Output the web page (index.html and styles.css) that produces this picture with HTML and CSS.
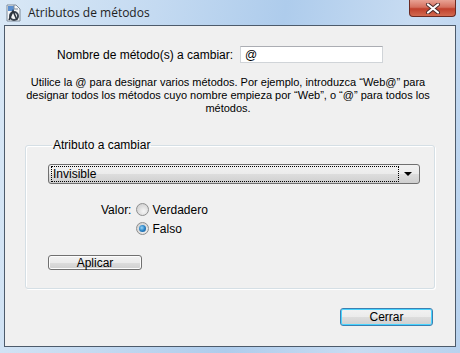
FILE: index.html
```html
<!DOCTYPE html>
<html lang="es">
<head>
    <meta charset="UTF-8">
    <title>Atributos de métodos</title>
    <link rel="stylesheet" href="styles.css">
</head>
<body>
    <div class="window">
        <div class="titlebar">
            <svg class="app-icon" width="18" height="18" viewBox="0 0 18 18">
                <path d="M2 1h9l4 4v12H2z" fill="#f4f6f8" stroke="#7d8a99"/>
                <rect x="3" y="2" width="6" height="5" fill="#5a8fd0"/>
                <path d="M9 1v4h4" fill="none" stroke="#7d8a99"/>
                <circle cx="9" cy="12" r="4" fill="none" stroke="#3b4450" stroke-width="2"/>
                <path d="M4 16l4-9 4 9" fill="none" stroke="#2c333c" stroke-width="1.6"/>
            </svg>
            <span class="title">Atributos de métodos</span>
            <div class="close-btn">
                <svg width="16" height="11" viewBox="0 0 16 11">
                    <path d="M3 1.5l10 8M13 1.5l-10 8" stroke="#4a2a2a" stroke-width="4" stroke-linecap="round"/>
                    <path d="M3 1.5l10 8M13 1.5l-10 8" stroke="#fff" stroke-width="2.2" stroke-linecap="round"/>
                </svg>
            </div>
        </div>
        <div class="client">
            <div class="name-row">
                <label for="nombre">Nombre de método(s) a cambiar:</label>
                <input id="nombre" class="textbox" type="text" value="@">
            </div>
            <p class="help">Utilice la @ para designar varios métodos. Por ejemplo, introduzca “Web@” para<br>designar todos los métodos cuyo nombre empieza por “Web”, o “@” para todos los<br>métodos.</p>

            <fieldset class="group">
                <legend>Atributo a cambiar</legend>
                <div class="combo">
                    <span class="combo-text">Invisible</span>
                    <span class="combo-arrow"></span>
                </div>
                <div class="value-row">
                    <span class="value-label">Valor:</span>
                    <div class="radios">
                        <div class="radio-item"><span class="radio"></span>Verdadero</div>
                        <div class="radio-item"><span class="radio checked"></span>Falso</div>
                    </div>
                </div>
                <button class="btn apply">Aplicar</button>
            </fieldset>

            <div class="footer">
                <button class="btn default">Cerrar</button>
            </div>
        </div>
    </div>
</body>
</html>
```

FILE: styles.css
```css
html, body {
    margin: 0;
    padding: 0;
}
body {
    width: 460px;
    height: 353px;
    overflow: hidden;
    font-family: "Liberation Sans", Arial, sans-serif;
    font-size: 11px;
    color: #000;
}
.window {
    width: 460px;
    height: 353px;
    box-sizing: border-box;
    padding: 0 4px 6px 4px;
    display: flex;
    flex-direction: column;
    background: linear-gradient(100deg, #d9e8f6 0%, #c4daf1 30%, #aeccec 55%, #c8dcf2 80%, #b8d2ee 100%);
}
.titlebar {
    height: 25px;
    display: flex;
    align-items: flex-start;
    position: relative;
}
.app-icon {
    margin: 4px 0 0 1px;
}
.title {
    font-family: "Open Sans", "Liberation Sans", sans-serif;
    font-size: 12px;
    margin: 4px 0 0 5px;
    color: #1e1e1e;
}
.close-btn {
    position: absolute;
    right: 0;
    top: 0;
    width: 47px;
    height: 17px;
    box-sizing: border-box;
    border: 1px solid #6b2a22;
    border-top: none;
    border-radius: 0 0 4px 4px;
    background: linear-gradient(#e8a294 0%, #d5705e 45%, #c0402c 55%, #d26a50 100%);
    display: flex;
    align-items: center;
    justify-content: center;
}
.client {
    flex: 1;
    border: 1px solid #4d5b6b;
    background: #f0f0f0;
    padding: 20px 0 0 0;
    display: flex;
    flex-direction: column;
}
.name-row {
    display: flex;
    align-items: center;
    padding-left: 52px;
}
.name-row label {
    width: 175px;
    white-space: nowrap;
    font-size: 12px;
}
.textbox {
    margin-left: 8px;
    width: 143px;
    height: 17px;
    box-sizing: border-box;
    border: 1px solid #d0d4d8;
    border-top-color: #abadb3;
    background: #fff;
    font: inherit;
    font-size: 12px;
    padding: 0 4px;
    outline: none;
}
.help {
    margin: 13px 0 0 0;
    text-align: center;
    line-height: 13px;
    white-space: nowrap;
    padding-right: 4px;
}
.group {
    margin: 23px 0 0 20px;
    width: 410px;
    height: 151px;
    box-sizing: border-box;
    border: 1px solid #d5dfe5;
    border-radius: 3px;
    box-shadow: inset 1px 1px 0 #fff, 1px 1px 0 #fff;
    padding: 12px 13px 0 22px;
}
.group legend {
    padding: 0 1px;
    margin-left: 4px;
    font-size: 12px;
}
.combo {
    width: 372px;
    height: 20px;
    box-sizing: border-box;
    border: 1px solid #707070;
    border-radius: 3px;
    background: linear-gradient(#f2f2f2 0%, #ebebeb 50%, #dddddd 51%, #cfcfcf 100%);
    display: flex;
    align-items: center;
    padding: 2px;
    font-size: 12px;
}
.combo-text {
    flex: 1;
    height: 14px;
    line-height: 14px;
    border: 1px dotted #000;
    padding-left: 1px;
}
.combo-arrow {
    width: 18px;
    height: 14px;
    display: flex;
    align-items: center;
    justify-content: center;
}
.combo-arrow::after {
    content: "";
    border-left: 4px solid transparent;
    border-right: 4px solid transparent;
    border-top: 4px solid #000;
}
.value-row {
    display: flex;
    margin-top: 19px;
    padding-left: 53px;
    font-size: 12px;
}
.value-label {
    margin-right: 5px;
}
.radios {
    display: flex;
    flex-direction: column;
    gap: 6px;
}
.radio-item {
    display: flex;
    align-items: center;
    gap: 3px;
    height: 13px;
}
.radio {
    width: 11px;
    height: 11px;
    border-radius: 50%;
    border: 1px solid #8e8f8f;
    background: radial-gradient(circle at 60% 65%, #f6f6f6 0%, #dcdcdc 55%, #cbcbcb 100%);
    position: relative;
}
.radio.checked::after {
    content: "";
    position: absolute;
    left: 2px;
    top: 2px;
    width: 7px;
    height: 7px;
    border-radius: 50%;
    background: radial-gradient(circle at 40% 40%, #9ad5f6 0%, #2b84c6 50%, #0f4c8a 100%);
}
.btn {
    font: inherit;
    font-size: 12px;
    color: #000;
    box-sizing: border-box;
    border: 1px solid #707070;
    border-radius: 3px;
    background: linear-gradient(#f2f2f2 0%, #ebebeb 50%, #dddddd 51%, #cfcfcf 100%);
    padding: 0;
    box-shadow: inset 0 0 0 1px #fcfcfc;
}
.apply {
    display: block;
    margin-top: 20px;
    width: 94px;
    height: 15px;
    line-height: 12px;
}
.footer {
    display: flex;
    justify-content: flex-end;
    padding-right: 22px;
    margin-top: 19px;
}
.default {
    width: 93px;
    height: 18px;
    border-color: #3c7fb1;
    box-shadow: inset 0 0 0 1px #48d4ff;
}
```
